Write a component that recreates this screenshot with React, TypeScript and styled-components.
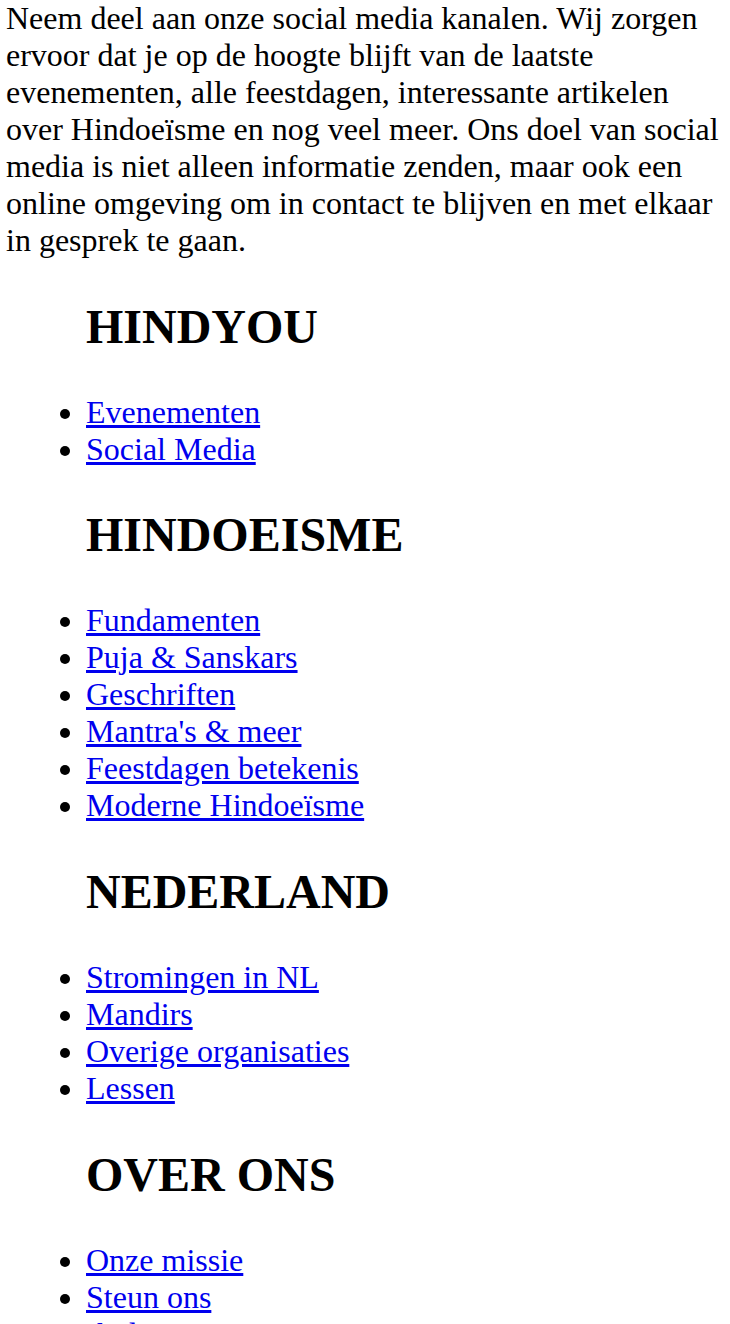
import React from "react";
import styled, { createGlobalStyle } from "styled-components";

const GlobalStyle = createGlobalStyle`
  html, body {
    margin: 0;
    padding: 0;
    background: #ffffff;
  }
  body {
    font-family: "Liberation Serif", "Times New Roman", Times, serif;
    font-size: 32px;
    color: #000000;
  }
`;

const Page = styled.div`
  padding: 0 6px;
`;

const Intro = styled.p`
  margin: 0 0 32px;
  font-size: 32px;
  line-height: normal;
`;

const Section = styled.section`
  display: block;
`;

const Heading = styled.h2`
  margin: 0.83em 0;
  padding-left: 80px;
  font-size: 48px;
  font-weight: bold;
  line-height: normal;
`;

const LinkList = styled.ul`
  margin: 32px 0;
  padding-left: 80px;
  list-style: disc outside;
`;

const Item = styled.li`
  line-height: normal;
`;

const NavLink = styled.a`
  color: #0000ee;
  text-decoration: underline;
`;

type NavGroup = { title: string; links: string[] };

const groups: NavGroup[] = [
  { title: "HINDYOU", links: ["Evenementen", "Social Media"] },
  {
    title: "HINDOEISME",
    links: [
      "Fundamenten",
      "Puja & Sanskars",
      "Geschriften",
      "Mantra's & meer",
      "Feestdagen betekenis",
      "Moderne Hindoeïsme",
    ],
  },
  {
    title: "NEDERLAND",
    links: ["Stromingen in NL", "Mandirs", "Overige organisaties", "Lessen"],
  },
  { title: "OVER ONS", links: ["Onze missie", "Steun ons", "Ik doe mee"] },
];

export default function App() {
  return (
    <>
      <GlobalStyle />
      <Page>
        <Intro>
          Neem deel aan onze social media kanalen. Wij zorgen ervoor dat je op
          de hoogte blijft van de laatste evenementen, alle feestdagen,
          interessante artikelen over Hindoeïsme en nog veel meer. Ons doel van
          social media is niet alleen informatie zenden, maar ook een online
          omgeving om in contact te blijven en met elkaar in gesprek te gaan.
        </Intro>
        {groups.map((g) => (
          <Section key={g.title}>
            <Heading>{g.title}</Heading>
            <LinkList>
              {g.links.map((l) => (
                <Item key={l}>
                  <NavLink href="#">{l}</NavLink>
                </Item>
              ))}
            </LinkList>
          </Section>
        ))}
      </Page>
    </>
  );
}
